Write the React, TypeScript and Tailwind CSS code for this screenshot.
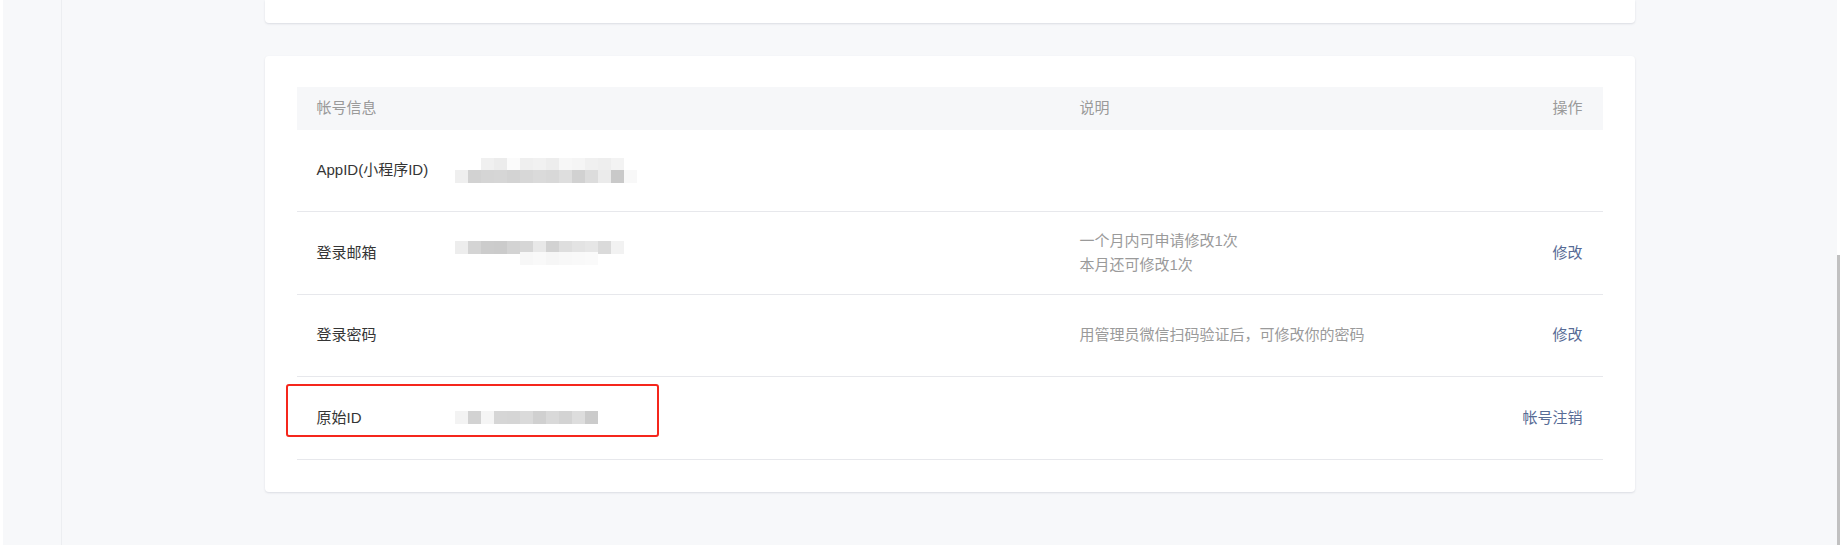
import React from 'react';

const FONT = { fontFamily: '"Liberation Sans", "Noto Sans CJK SC", sans-serif' };

type Band = { offset: number; top: number; shades: string[] };

// pixelated (mosaic) value, blocks of 13px
function Mosaic({ bands, height }: { bands: Band[]; height: number }) {
  return (
    <div className="relative w-[190px] blur-[0.6px]" style={{ height }}>
      {bands.map((b, i) => (
        <div key={i} className="absolute flex" style={{ left: b.offset, top: b.top }}>
          {b.shades.map((c, j) => (
            <div key={j} className="h-[13px] w-[13px]" style={{ backgroundColor: c }} />
          ))}
        </div>
      ))}
    </div>
  );
}

const appIdMosaic: Band[] = [
  { offset: 26, top: 0, shades: ['#f0f0f0', '#ececec', '#fbfbfb', '#efefef', '#f1f1f1', '#ededed', '#f7f7f7', '#f5f5f5', '#f0f0f0', '#eeeeee', '#f3f3f3'] },
  { offset: 0, top: 12, shades: ['#efefef', '#d2d2d2', '#d5d5d5', '#d6d6d6', '#d3d3d3', '#d7d7d7', '#dadada', '#d8d8d8', '#dedede', '#d1d1d1', '#dcdcdc', '#ebebeb', '#c9c9c9', '#f8f8f8'] },
];

const emailMosaic: Band[] = [
  { offset: 0, top: 0, shades: ['#ededed', '#d4d4d4', '#cccccc', '#cbcbcb', '#d3d3d3', '#d6d6d6', '#e8e8e8', '#d2d2d2', '#dedede', '#e3e3e3', '#e6e6e6', '#dadada', '#f2f2f2'] },
  { offset: 65, top: 11, shades: ['#f7f7f7', '#f9f9f9', '#f6f6f6', '#f8f8f8', '#f9f9f9', '#fafafa'] },
];

const originMosaic: Band[] = [
  { offset: 0, top: 0, shades: ['#f3f3f3', '#d2d2d2', '#f5f5f5', '#d6d6d6', '#d5d5d5', '#dadada', '#d0d0d0', '#d9d9d9', '#d3d3d3', '#dddddd', '#cbcbcb'] },
];

export default function App() {
  return (
    <div className="flex h-[545px] w-full overflow-hidden bg-[#f7f8fa]" style={FONT}>
      {/* left edge + sidebar rail */}
      <div className="w-[3px] bg-white" />
      <div className="w-[59px] border-r border-[#eceef1]" />

      {/* main */}
      <div className="flex-1">
        <div className="mx-auto w-[1370px]">
          <div className="h-[23px] rounded-b-[4px] bg-white shadow-[0_1px_2px_rgba(140,145,160,0.25)]" />

          <div className="mt-[33px] rounded-[4px] bg-white px-[32px] pt-[31px] pb-[32px] shadow-[0_1px_2px_rgba(140,145,160,0.25)]">
            {/* header */}
            <div className="flex h-[43px] items-center bg-[#f6f7f9] px-[20px] text-[15px] text-[#9a9a9a]">
              <div className="w-[763px]">帐号信息</div>
              <div className="flex-1">说明</div>
              <div className="text-right">操作</div>
            </div>

            {/* AppID */}
            <div className="flex h-[82px] items-center border-b border-[#e7e8ec] px-[20px] text-[15px]">
              <div className="flex w-[763px] items-center">
                <span className="w-[138px] text-[#353535]">AppID(小程序ID)</span>
                <Mosaic bands={appIdMosaic} height={25} />
              </div>
              <div className="flex-1" />
            </div>

            {/* 登录邮箱 */}
            <div className="flex h-[83px] items-center border-b border-[#e7e8ec] px-[20px] text-[15px]">
              <div className="flex w-[763px] items-center">
                <span className="w-[138px] text-[#353535]">登录邮箱</span>
                <Mosaic bands={emailMosaic} height={24} />
              </div>
              <div className="flex-1 leading-[24px] text-[#9a9a9a]">
                <div>一个月内可申请修改1次</div>
                <div>本月还可修改1次</div>
              </div>
              <a className="text-right text-[#576b95]">修改</a>
            </div>

            {/* 登录密码 */}
            <div className="flex h-[82px] items-center border-b border-[#e7e8ec] px-[20px] text-[15px]">
              <div className="w-[763px]">
                <span className="text-[#353535]">登录密码</span>
              </div>
              <div className="flex-1 text-[#9a9a9a]">用管理员微信扫码验证后，可修改你的密码</div>
              <a className="text-right text-[#576b95]">修改</a>
            </div>

            {/* 原始ID */}
            <div className="relative flex h-[83px] items-center border-b border-[#e7e8ec] px-[20px] text-[15px]">
              <div className="flex w-[763px] items-center">
                <span className="w-[138px] text-[#353535]">原始ID</span>
                <Mosaic bands={originMosaic} height={14} />
              </div>
              <div className="flex-1" />
              <a className="text-right text-[#576b95]">帐号注销</a>
              {/* red highlight annotation */}
              <div className="absolute left-[-11px] top-[7px] h-[53px] w-[373px] rounded-[3px] border-2 border-[#f5261c]" />
            </div>
          </div>
        </div>
      </div>

      {/* scrollbar */}
      <div className="flex w-[3px] flex-col bg-white">
        <div className="h-[255px]" />
        <div className="flex-1 bg-[#c1c1c1]" />
      </div>
    </div>
  );
}
